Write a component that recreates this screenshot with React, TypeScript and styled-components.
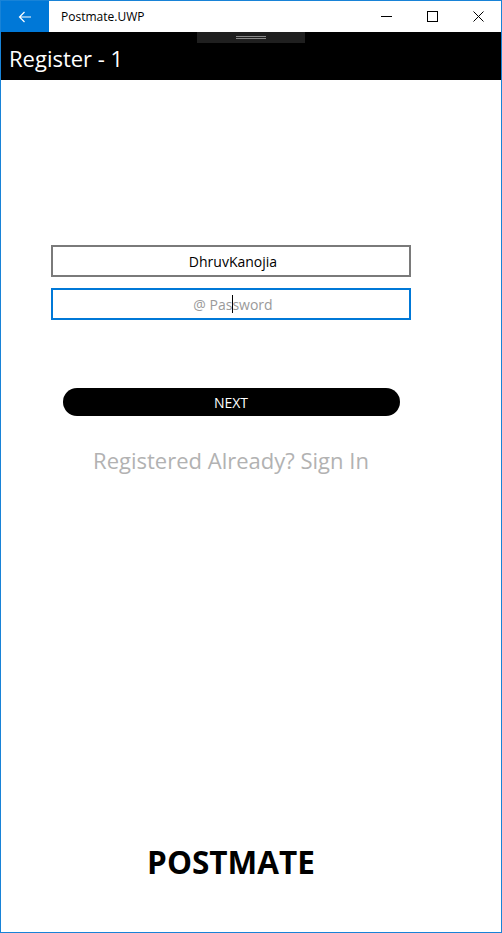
import React from "react";
import styled, { createGlobalStyle } from "styled-components";

const Global = createGlobalStyle`
  html, body { margin: 0; padding: 0; background: #fff; }
  body { font-family: "Open Sans", "Noto Sans", sans-serif; }
  * { box-sizing: border-box; }
`;

const Frame = styled.div`
  width: 502px;
  height: 933px;
  border: 1px solid #1883d7;
  display: flex;
  flex-direction: column;
  background: #fff;
  overflow: hidden;
`;

const TitleBar = styled.div`
  height: 31px;
  display: flex;
  align-items: center;
  background: #fff;
`;

const BackButton = styled.div`
  width: 48px;
  height: 31px;
  background: #0078d7;
  display: flex;
  align-items: center;
  justify-content: center;
`;

const AppTitle = styled.div`
  font-family: "Open Sans", sans-serif;
  font-size: 12px;
  color: #000;
  margin-left: 12px;
  flex: 1;
`;

const WinButton = styled.div`
  width: 46px;
  height: 31px;
  display: flex;
  align-items: center;
  justify-content: center;
`;

const Header = styled.div`
  position: relative;
  height: 48px;
  background: #000;
  display: flex;
  align-items: center;
  padding-left: 8px;
`;

const HeaderTitle = styled.div`
  color: #fff;
  font-family: "Open Sans", sans-serif;
  font-size: 22px;
  font-weight: 400;
  margin-top: 4px;
`;

const DragHandle = styled.div`
  position: absolute;
  left: 196px;
  top: 0;
  width: 108px;
  height: 11px;
  background: #1f1f1f;
  display: flex;
  flex-direction: column;
  align-items: center;
  justify-content: center;
  gap: 1px;
`;

const HandleLine = styled.div`
  width: 30px;
  height: 1px;
  background: #8a8a8a;
`;

const Content = styled.div`
  flex: 1;
  display: flex;
  flex-direction: column;
  padding: 165px 0 0 50px;
`;

const Form = styled.div`
  width: 360px;
  display: flex;
  flex-direction: column;
  align-items: center;
`;

const Field = styled.div<{ $focused?: boolean }>`
  width: 360px;
  height: 32px;
  border: 2px solid ${(p) => (p.$focused ? "#0078d7" : "#7a7a7a")};
  display: flex;
  align-items: center;
  justify-content: center;
  font-family: "Open Sans", sans-serif;
  font-size: 14px;
  color: ${(p) => (p.$focused ? "#9a9a9a" : "#000")};
  margin-bottom: 11px;
  padding-left: 4px;
  position: relative;
`;

const Caret = styled.span`
  display: inline-block;
  width: 1px;
  height: 18px;
  background: #000;
  vertical-align: middle;
  margin: 0 -0.5px;
`;

const NextButton = styled.div`
  margin-top: 57px;
  width: 337px;
  height: 28px;
  border-radius: 14px;
  background: #000;
  color: #fff;
  display: flex;
  align-items: center;
  justify-content: center;
  font-family: "Open Sans", sans-serif;
  font-size: 14px;
`;

const SignIn = styled.div`
  margin-top: 29px;
  font-family: "Open Sans", sans-serif;
  font-size: 22px;
  color: #b2b2b2;
`;

const Spacer = styled.div`
  flex: 1;
`;

const Brand = styled.div`
  width: 360px;
  text-align: center;
  font-family: "Open Sans", sans-serif;
  font-weight: 700;
  font-size: 31.5px;
  color: #000;
  margin-bottom: 49px;
`;

export default function App() {
  return (
    <>
      <Global />
      <Frame>
        <TitleBar>
          <BackButton>
            <svg width="14" height="12" viewBox="0 0 14 12">
              <path d="M13 6H1.5M6.5 1L1.5 6l5 5" stroke="#fff" strokeWidth="1.2" fill="none" />
            </svg>
          </BackButton>
          <AppTitle>Postmate.UWP</AppTitle>
          <WinButton>
            <svg width="11" height="11" viewBox="0 0 11 11">
              <path d="M0 5.5h11" stroke="#000" strokeWidth="1" />
            </svg>
          </WinButton>
          <WinButton>
            <svg width="11" height="11" viewBox="0 0 11 11">
              <rect x="0.5" y="0.5" width="10" height="10" stroke="#000" strokeWidth="1" fill="none" />
            </svg>
          </WinButton>
          <WinButton>
            <svg width="11" height="11" viewBox="0 0 11 11">
              <path d="M0.5 0.5l10 10M10.5 0.5l-10 10" stroke="#000" strokeWidth="1" />
            </svg>
          </WinButton>
        </TitleBar>
        <Header>
          <DragHandle>
            <HandleLine />
            <HandleLine />
          </DragHandle>
          <HeaderTitle>Register - 1</HeaderTitle>
        </Header>
        <Content>
          <Form>
            <Field>DhruvKanojia</Field>
            <Field $focused>
              @ Pas<Caret />sword
            </Field>
            <NextButton>NEXT</NextButton>
            <SignIn>Registered Already? Sign In</SignIn>
          </Form>
          <Spacer />
          <Brand>POSTMATE</Brand>
        </Content>
      </Frame>
    </>
  );
}
